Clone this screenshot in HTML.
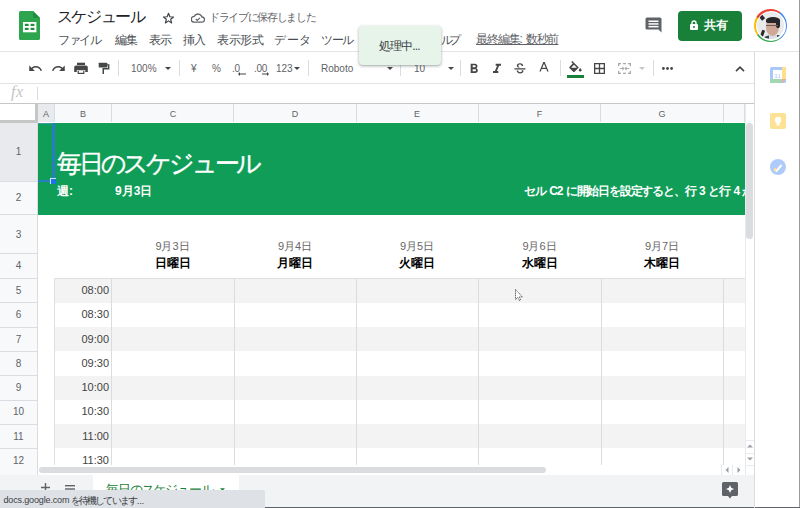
<!DOCTYPE html>
<html><head><meta charset="utf-8">
<style>
*{margin:0;padding:0;box-sizing:border-box}
html,body{width:800px;height:508px;overflow:hidden;background:#fff;font-family:"Liberation Sans",sans-serif;color:#202124}
.a{position:absolute}
.t{position:absolute;white-space:nowrap;line-height:1}
.hl{position:absolute;height:1px}
.vl{position:absolute;width:1px}
.ch{position:absolute;top:110px;font-size:9px;color:#5f6368;text-align:center;line-height:1}
.cb{position:absolute;top:104px;width:1px;height:18px;background:#dadce0}
.rn{position:absolute;left:0;width:37px;font-size:10px;color:#5f6368;text-align:center;line-height:1}
.rb{position:absolute;left:0;width:37px;height:1px;background:#dadce0}
.tm{position:absolute;left:55px;width:54px;text-align:right;font-size:11px;color:#434343;line-height:1}
.sep{position:absolute;top:60px;width:1px;height:16px;background:#dadce0}
.menu{position:absolute;top:34px;font-size:12px;color:#4a4e52;white-space:nowrap;line-height:1}
.dt{position:absolute;top:241px;text-align:center;font-size:11px;color:#666;line-height:1;white-space:nowrap}
.dw{position:absolute;top:257px;text-align:center;font-size:12px;color:#000;font-weight:bold;line-height:1;white-space:nowrap}
.ico{position:absolute;fill:#444746}
</style></head><body>

<!-- ===== Top header ===== -->
<svg class="a" style="left:19px;top:11px" width="21" height="29" viewBox="0 0 21 29">
 <path d="M1.6 0H14l7 7v20.4a1.6 1.6 0 0 1-1.6 1.6H1.6A1.6 1.6 0 0 1 0 27.4V1.6A1.6 1.6 0 0 1 1.6 0z" fill="#2da44e"/>
 <path d="M14 0l7 7h-5.4A1.6 1.6 0 0 1 14 5.4z" fill="#1e8e3e"/>
 <rect x="4" y="11" width="13.4" height="10.3" fill="#fff"/>
 <rect x="5.8" y="12.8" width="3.8" height="2.2" fill="#1e8e3e"/>
 <rect x="11.6" y="12.8" width="3.8" height="2.2" fill="#1e8e3e"/>
 <rect x="5.8" y="16.8" width="3.8" height="2.2" fill="#1e8e3e"/>
 <rect x="11.6" y="16.8" width="3.8" height="2.2" fill="#1e8e3e"/>
</svg>
<div id="title" class="t" style="left:56.75px;top:9px;font-size:16px;color:#202124;letter-spacing:-1.35px">スケジュール</div>
<svg class="a" style="left:162px;top:12px" width="13" height="12" viewBox="0 0 24 23"><path d="M12 2.5l2.6 6.6 7.1.4-5.5 4.5 1.8 6.9L12 17l-6 3.9 1.8-6.9-5.5-4.5 7.1-.4z" fill="none" stroke="#3c4043" stroke-width="2.2" stroke-linejoin="round"/></svg>
<svg class="a" style="left:191px;top:13px" width="14" height="10" viewBox="0 0 14 10"><path d="M3.2 9.2h7.6a2.6 2.6 0 0 0 .2-5.2A4.2 4.2 0 0 0 3.2 3.4 2.9 2.9 0 0 0 3.2 9.2z" fill="none" stroke="#5f6368" stroke-width="1.3"/><path d="M4.8 6l1.5 1.5 2.6-2.6" fill="none" stroke="#5f6368" stroke-width="1.2"/></svg>
<div id="saved" class="t" style="left:209px;top:12px;font-size:11px;color:#5f6368;letter-spacing:-1.33px">ドライブに保存しました</div>

<div id="m1" class="menu" style="left:58px;letter-spacing:-1.5px">ファイル</div>
<div id="m2" class="menu" style="left:115px;letter-spacing:-1.5px">編集</div>
<div id="m3" class="menu" style="left:149px;letter-spacing:-1.5px">表示</div>
<div id="m4" class="menu" style="left:183px;letter-spacing:-1.5px">挿入</div>
<div id="m5" class="menu" style="left:217px;letter-spacing:-0.5px">表示形式</div>
<div id="m6" class="menu" style="left:274px;letter-spacing:0.5px">データ</div>
<div id="m7" class="menu" style="left:321px;letter-spacing:-1.5px">ツール</div>
<div id="m8" class="menu" style="left:441px;letter-spacing:-4.5px">ルプ</div>
<div id="lastedit" class="t" style="left:476px;top:33px;font-size:12px;color:#5f6368;text-decoration:underline;letter-spacing:-1.15px;word-spacing:2px">最終編集: 数秒前</div>

<!-- comment icon -->
<svg class="a" style="left:645px;top:17px" width="17" height="16" viewBox="0 0 17 16"><path d="M2 0.5h13a1.5 1.5 0 0 1 1.5 1.5v13.5l-3-3H2A1.5 1.5 0 0 1 .5 11V2A1.5 1.5 0 0 1 2 .5z" fill="#5f6368"/><rect x="3.5" y="3.5" width="10" height="1.5" fill="#fff"/><rect x="3.5" y="6.2" width="10" height="1.5" fill="#fff"/><rect x="3.5" y="8.9" width="10" height="1.5" fill="#fff"/></svg>
<!-- share btn -->
<div class="a" style="left:678px;top:11px;width:64px;height:30px;background:#188038;border-radius:4px"></div>
<svg class="a" style="left:690px;top:20px" width="8" height="10" viewBox="0 0 8 10"><path d="M2 4.5V3a2 2 0 0 1 4 0v1.5" fill="none" stroke="#fff" stroke-width="1.4"/><rect x="0" y="4" width="8" height="6" rx="1" fill="#fff"/><circle cx="4" cy="7" r="1" fill="#188038"/></svg>
<div id="share" class="t" style="left:704px;top:19px;font-size:12px;color:#fff;font-weight:bold">共有</div>
<!-- avatar -->
<div class="a" style="left:754px;top:9px;width:33px;height:33px;border-radius:50%;background:conic-gradient(#ea4335 0 35deg,#4285f4 35deg 145deg,#34a853 145deg 235deg,#fbbc04 235deg 300deg,#ea4335 300deg)"></div>
<div class="a" style="left:755.5px;top:10.5px;width:30px;height:30px;border-radius:50%;background:#fff"></div>
<div class="a" style="left:757px;top:12px;width:27px;height:27px;border-radius:50%;overflow:hidden;background:#e9eaec">
 <div class="a" style="left:0;top:0;width:27px;height:27px;filter:blur(0.6px)">
  <div class="a" style="left:3px;top:3px;width:4px;height:5px;background:#2a2a2e;transform:rotate(-40deg)"></div>
  <div class="a" style="left:4px;top:18px;width:3px;height:7px;background:#2a2a2e;transform:rotate(20deg)"></div>
  <div class="a" style="left:7px;top:23px;width:22px;height:8px;border-radius:40% 40% 0 0;background:#3b3f4a"></div>
  <div class="a" style="left:12px;top:23px;width:8px;height:5px;background:#d9dde4"></div>
  <div class="a" style="left:9px;top:7px;width:13px;height:17px;border-radius:45% 45% 50% 50%;background:#cfa896"></div>
  <div class="a" style="left:9px;top:5px;width:14px;height:6px;border-radius:50% 50% 20% 20%;background:#25252a"></div>
  <div class="a" style="left:19px;top:8px;width:4px;height:8px;border-radius:40%;background:#25252a"></div>
  <div class="a" style="left:9px;top:13px;width:12px;height:1px;background:#6a5f5a"></div>
 </div>
</div>

<!-- toast -->
<div class="a" style="z-index:5;left:359px;top:26px;width:82px;height:39px;background:#e6f4ea;border-radius:4px;box-shadow:0 1px 2px rgba(60,64,67,.3),0 1px 3px 1px rgba(60,64,67,.15)"></div>
<div id="toast" class="t" style="z-index:6;left:379px;top:40px;font-size:12px;color:#3c4043;letter-spacing:-0.9px">処理中...</div>

<div class="hl" style="left:0;top:51px;width:799px;background:#e3e5e8"></div>

<!-- ===== Toolbar ===== -->
<!-- undo -->
<svg class="ico" style="left:28px;top:61px" width="15" height="15" viewBox="0 0 24 24"><path d="M12.5 8c-2.65 0-5.05.99-6.9 2.6L2 7v9h9l-3.62-3.62c1.39-1.16 3.16-1.88 5.12-1.88 3.54 0 6.55 2.31 7.6 5.5l2.37-.78C21.08 11.03 17.15 8 12.5 8z"/></svg>
<!-- redo -->
<svg class="ico" style="left:51px;top:61px" width="15" height="15" viewBox="0 0 24 24"><path d="M18.4 10.6C16.55 8.99 14.15 8 11.5 8c-4.65 0-8.58 3.03-9.96 7.22L3.9 16c1.05-3.19 4.05-5.5 7.6-5.5 1.95 0 3.73.72 5.12 1.88L13 16h9V7l-3.6 3.6z"/></svg>
<!-- print -->
<svg class="ico" style="left:73px;top:61px" width="16" height="14" viewBox="0 0 16 14"><rect x="4" y="1.7" width="8" height="2.3"/><path d="M3 4.5h10a1.8 1.8 0 0 1 1.8 1.8V11h-2.6V9H3.8v2H1.2V6.3A1.8 1.8 0 0 1 3 4.5z"/><rect x="4.6" y="9.6" width="6.8" height="3.4"/><rect x="5.8" y="9.6" width="4.4" height="2.2" fill="#fff"/></svg>
<!-- paint format -->
<svg class="ico" style="left:98px;top:62px" width="12" height="13" viewBox="0 0 12 13"><rect x="0.7" y="0.7" width="8.5" height="4.8" rx=".6"/><path d="M9 2.2h2.4v5.3H6V12H4.5V6h5.4V3.6H9z"/></svg>
<div class="sep" style="left:118px"></div>
<div class="t" style="left:131px;top:64px;font-size:10px;color:#5f6368">100%</div>
<svg class="ico" style="left:165px;top:67px" width="6" height="3" viewBox="0 0 6 3"><path d="M0 0h6L3 3z"/></svg>
<div class="sep" style="left:179px"></div>
<div class="t" style="left:191px;top:64px;font-size:10px;color:#5f6368">¥</div>
<div class="t" style="left:212px;top:64px;font-size:10px;color:#5f6368">%</div>
<div class="t" style="left:232px;top:64px;font-size:10px;color:#5f6368;letter-spacing:-0.3px">.0</div>
<svg class="ico" style="left:238px;top:72px" width="8" height="4" viewBox="0 0 8 4"><path d="M2 0v1.4h6v1.2H2V4L0 2z"/></svg>
<div class="t" style="left:254px;top:64px;font-size:10px;color:#5f6368;letter-spacing:-0.3px">.00</div>
<svg class="ico" style="left:262px;top:72px" width="7" height="4" viewBox="0 0 7 4"><path d="M5 0v1.4H0v1.2h5V4l2-2z"/></svg>
<div class="t" style="left:276px;top:64px;font-size:10px;color:#5f6368">123</div>
<svg class="ico" style="left:294px;top:67px" width="6" height="3" viewBox="0 0 6 3"><path d="M0 0h6L3 3z"/></svg>
<div class="sep" style="left:308px"></div>
<div class="t" style="left:321px;top:64px;font-size:10px;color:#5f6368">Roboto</div>
<svg class="ico" style="left:387px;top:67px" width="6" height="3" viewBox="0 0 6 3"><path d="M0 0h6L3 3z"/></svg>
<div class="sep" style="left:400px"></div>
<div class="t" style="left:414px;top:64px;font-size:10px;color:#5f6368">10</div>
<svg class="ico" style="left:448px;top:67px" width="6" height="3" viewBox="0 0 6 3"><path d="M0 0h6L3 3z"/></svg>
<div class="sep" style="left:460px"></div>
<svg class="ico" style="left:466px;top:61px" width="16" height="16" viewBox="0 0 24 24"><path d="M15.6 10.79c.97-.67 1.65-1.770 1.65-2.79 0-2.26-1.75-4-4-4H7v14h7.04c2.09 0 3.710-1.7 3.710-3.79 0-1.52-.86-2.82-2.15-3.42zM10 6.5h3c.83 0 1.5.67 1.5 1.5s-.67 1.5-1.5 1.5h-3v-3zm3.5 9H10v-3h3.5c.83 0 1.5.67 1.5 1.5s-.67 1.5-1.5 1.5z"/></svg>
<svg class="ico" style="left:489px;top:61px" width="16" height="16" viewBox="0 0 24 24"><path d="M10 4v3h2.21l-3.42 8H6v3h8v-3h-2.21l3.42-8H18V4z"/></svg>
<svg class="ico" style="left:514px;top:62px" width="12" height="12" viewBox="0 0 12 12"><path d="M6 1.2c-2 0-3.2 1-3.2 2.4 0 .8.4 1.4 1 1.8h2.6C5 5 4.3 4.6 4.3 3.7c0-.7.6-1.2 1.7-1.2 1.1 0 1.7.6 1.7 1.5h1.5C9.2 2.3 8 1.2 6 1.2zM0.5 6.2v1.3h11V6.2zM7.6 8.3c.1.2.2.4.2.7 0 .8-.6 1.2-1.7 1.2-1.2 0-1.9-.6-1.9-1.6H2.7c0 1.7 1.4 2.9 3.4 2.9 2 0 3.3-1 3.3-2.5 0-.3 0-.5-.1-.7z"/></svg>
<svg class="ico" style="left:539px;top:62px" width="10" height="10" viewBox="0 0 10 10"><path d="M4.3 0h1.4L9.6 9.5H8.2L7.3 7.1H2.7l-.9 2.4H.4zM5 1.8L3.2 5.8h3.6z"/></svg>
<div class="sep" style="left:560px"></div>
<svg class="ico" style="left:569px;top:61px" width="13" height="11" viewBox="0 0 13 11"><path d="M3.2 0l-1 1 1.6 1.6L.6 5.8a1 1 0 0 0 0 1.4l3.6 3.6a1 1 0 0 0 1.4 0l4.2-4.2zM5 3.8l2.9 2.9H2.1z"/><path d="M11.2 7s-1.3 1.5-1.3 2.3a1.3 1.3 0 0 0 2.6 0C12.5 8.5 11.2 7 11.2 7z"/></svg>
<div class="a" style="left:567px;top:75px;width:17px;height:3px;background:#188038"></div>
<svg class="ico" style="left:594px;top:63px" width="11" height="11" viewBox="0 0 11 11"><path d="M0 0h11v11H0zM1.3 1.3v3.55h3.55V1.3zm4.85 0v3.55H9.7V1.3zM1.3 6.15V9.7h3.55V6.15zm4.85 0V9.7H9.7V6.15z"/></svg>
<svg class="a" style="left:618px;top:63px" width="13" height="11" viewBox="0 0 13 11"><g fill="#a8abad"><rect x="0" y="0" width="3" height="1.3"/><rect x="10" y="0" width="3" height="1.3"/><rect x="0" y="9.7" width="3" height="1.3"/><rect x="10" y="9.7" width="3" height="1.3"/><rect x="0" y="0" width="1.3" height="3.2"/><rect x="11.7" y="0" width="1.3" height="3.2"/><rect x="0" y="7.8" width="1.3" height="3.2"/><rect x="11.7" y="7.8" width="1.3" height="3.2"/><rect x="5" y="0" width="3" height="1.3"/><rect x="5" y="9.7" width="3" height="1.3"/><path d="M1.8 4.9h2.6V3.3l2.1 2.2-2.1 2.2V6.1H1.8zM11.2 4.9H8.6V3.3L6.5 5.5l2.1 2.2V6.1h2.6z"/></g></svg>
<svg class="a" style="left:639px;top:67px" width="6" height="3" viewBox="0 0 6 3"><path d="M0 0h6L3 3z" fill="#c4c7c5"/></svg>
<div class="sep" style="left:653px"></div>
<svg class="ico" style="left:662px;top:67px" width="11" height="3" viewBox="0 0 11 3"><circle cx="1.4" cy="1.5" r="1.4"/><circle cx="5.5" cy="1.5" r="1.4"/><circle cx="9.6" cy="1.5" r="1.4"/></svg>
<svg class="a" style="left:735px;top:66px" width="10" height="6" viewBox="0 0 10 6"><path d="M1 5.2l4-4 4 4" fill="none" stroke="#444746" stroke-width="1.7"/></svg>

<div class="hl" style="left:0;top:83px;width:755px;background:#e3e3e3"></div>
<!-- formula bar -->
<div id="fx" class="t" style="left:11px;top:84px;font-size:16px;font-style:italic;font-family:'Liberation Serif',serif;color:#c4c4c4;letter-spacing:0.5px">fx</div>
<div class="vl" style="left:37px;top:87px;height:13px;background:#dadce0"></div>
<div class="hl" style="left:0;top:103px;width:755px;background:#c4c7c5"></div>

<!-- right side panel -->
<div class="vl" style="left:754px;top:52px;height:456px;background:#dadce0"></div>
<div class="vl" style="left:799px;top:0;height:508px;background:#9a9a9a"></div>
<div class="hl" style="left:755px;top:507px;width:45px;background:#5f6368"></div>
<svg class="a" style="left:770px;top:67px;opacity:.45" width="16" height="16" viewBox="0 0 16 16"><rect x="0" y="0" width="16" height="16" rx="1.5" fill="#4285f4"/><rect x="0" y="12" width="12" height="4" fill="#34a853"/><rect x="12" y="0" width="4" height="12" fill="#fbbc04"/><path d="M12 12h4l-4 4z" fill="#ea4335"/><rect x="3" y="3" width="9" height="9" fill="#fff"/><text x="7.5" y="10.5" font-size="6" text-anchor="middle" fill="#4285f4" font-family="Liberation Sans">31</text></svg>
<svg class="a" style="left:770px;top:113px;opacity:.42" width="16" height="16" viewBox="0 0 16 16"><rect x="0" y="0" width="16" height="16" rx="2" fill="#fbbc04"/><circle cx="8" cy="7" r="3.2" fill="#fff"/><rect x="6.5" y="9.5" width="3" height="3" fill="#fff"/></svg>
<svg class="a" style="left:770px;top:159px;opacity:.42" width="16" height="16" viewBox="0 0 16 16"><circle cx="8" cy="8" r="8" fill="#4285f4"/><path d="M4.5 10.5l2 1.5 5-6" fill="none" stroke="#fff" stroke-width="2"/><circle cx="5" cy="10.5" r="1.4" fill="#fbbc04"/></svg>

<!-- column headers -->
<div class="a" style="left:0;top:104px;width:745px;height:18px;background:#f8f9fa"></div>
<div class="a" style="left:0;top:104px;width:35px;height:16px;background:#fff"></div>
<div class="a" style="left:38px;top:104px;width:16px;height:18px;background:#e8eaed"></div>
<div class="ch" style="left:38px;width:16px">A</div>
<div class="ch" style="left:55px;width:56px">B</div>
<div class="ch" style="left:112px;width:122px">C</div>
<div class="ch" style="left:234px;width:122px">D</div>
<div class="ch" style="left:356px;width:122px">E</div>
<div class="ch" style="left:478px;width:123px">F</div>
<div class="ch" style="left:601px;width:122px">G</div>
<div class="cb" style="left:54px"></div>
<div class="cb" style="left:111px"></div>
<div class="cb" style="left:233px"></div>
<div class="cb" style="left:356px"></div>
<div class="cb" style="left:478px"></div>
<div class="cb" style="left:600px"></div>
<div class="cb" style="left:723px"></div>
<div class="cb" style="left:744px"></div>

<!-- row headers -->
<div class="a" style="left:0;top:122px;width:37px;height:353px;background:#f8f9fa"></div>
<div class="a" style="left:0;top:122px;width:37px;height:59px;background:#e8eaed"></div>
<div class="vl" style="left:37px;top:122px;height:353px;background:#dadce0"></div>
<div class="rb" style="top:181px"></div>
<div class="rb" style="top:214px"></div>
<div class="rb" style="top:253px"></div>
<div class="rb" style="top:278px"></div>
<div class="rb" style="top:302px"></div>
<div class="rb" style="top:327px"></div>
<div class="rb" style="top:351px"></div>
<div class="rb" style="top:375px"></div>
<div class="rb" style="top:400px"></div>
<div class="rb" style="top:424px"></div>
<div class="rb" style="top:448px"></div>
<div class="rn" style="top:147px">1</div>
<div class="rn" style="top:193px">2</div>
<div class="rn" style="top:230px">3</div>
<div class="rn" style="top:261px">4</div>
<div class="rn" style="top:286px">5</div>
<div class="rn" style="top:310px">6</div>
<div class="rn" style="top:335px">7</div>
<div class="rn" style="top:359px">8</div>
<div class="rn" style="top:383px">9</div>
<div class="rn" style="top:407px">10</div>
<div class="rn" style="top:432px">11</div>
<div class="rn" style="top:456px">12</div>
<!-- freeze bars -->
<div class="a" style="left:35px;top:104px;width:3px;height:19px;background:#c4c7c5"></div>
<div class="a" style="left:0;top:120px;width:38px;height:3px;background:#c4c7c5"></div>

<!-- green header -->
<div class="a" style="left:38px;top:123px;width:707px;height:92px;background:#0f9d58"></div>
<div id="bigt" class="t" style="left:57px;top:151px;font-size:25px;color:#fff;letter-spacing:-3.2px;-webkit-text-stroke:0.35px #fff">毎日のスケジュール</div>
<div id="week" class="t" style="left:57px;top:185px;font-size:12px;color:#fff;font-weight:bold">週:</div>
<div id="wdate" class="t" style="left:115px;top:185px;font-size:12px;color:#fff;font-weight:bold;letter-spacing:0px">9月3日</div>
<div class="a" style="left:520px;top:180px;width:225px;height:20px;overflow:hidden"><div id="note" class="t" style="left:4px;top:5px;font-size:12px;color:#fff;font-weight:bold;letter-spacing:-1.2px;word-spacing:1.5px">セル C2 に開始日を設定すると、行 3 と行 4 が</div></div>

<!-- selection -->
<div class="a" style="left:38px;top:123px;width:16px;height:1px;background:#5b9bd5;opacity:.6"></div>
<div class="a" style="left:52px;top:123px;width:3px;height:56px;background:#2a7dc2"></div>
<div class="a" style="left:38px;top:180px;width:13px;height:2px;background:#2a7dc2"></div>
<div class="a" style="left:50px;top:178px;width:6px;height:6px;background:#1a73e8;border-top:1px solid #cfe6f5;border-left:1px solid #cfe6f5"></div>

<!-- dates -->
<div id="d1" class="dt" style="left:111px;width:123px">9月3日</div>
<div class="dt" style="left:234px;width:122px">9月4日</div>
<div class="dt" style="left:356px;width:122px">9月5日</div>
<div class="dt" style="left:478px;width:123px">9月6日</div>
<div class="dt" style="left:601px;width:122px">9月7日</div>
<div id="w1" class="dw" style="left:111px;width:123px">日曜日</div>
<div class="dw" style="left:234px;width:122px">月曜日</div>
<div class="dw" style="left:356px;width:122px">火曜日</div>
<div class="dw" style="left:478px;width:123px">水曜日</div>
<div class="dw" style="left:601px;width:122px">木曜日</div>

<!-- schedule grid -->
<div class="a" style="left:55px;top:278px;width:690px;height:25px;background:#f3f3f3"></div>
<div class="a" style="left:55px;top:327px;width:690px;height:24px;background:#f3f3f3"></div>
<div class="a" style="left:55px;top:376px;width:690px;height:24px;background:#f3f3f3"></div>
<div class="a" style="left:55px;top:424px;width:690px;height:24px;background:#f3f3f3"></div>
<div class="hl" style="left:54px;top:278px;width:691px;background:#e0e0e0"></div>
<div class="vl" style="left:54px;top:278px;height:187px;background:#e0e0e0"></div>
<div class="vl" style="left:111px;top:278px;height:187px;background:#dcdcdc"></div>
<div class="vl" style="left:234px;top:278px;height:187px;background:#dcdcdc"></div>
<div class="vl" style="left:356px;top:278px;height:187px;background:#dcdcdc"></div>
<div class="vl" style="left:478px;top:278px;height:187px;background:#dcdcdc"></div>
<div class="vl" style="left:601px;top:278px;height:187px;background:#dcdcdc"></div>
<div class="vl" style="left:723px;top:278px;height:187px;background:#dcdcdc"></div>

<div class="tm" style="top:285px">08:00</div>
<div class="tm" style="top:309px">08:30</div>
<div class="tm" style="top:334px">09:00</div>
<div class="tm" style="top:358px">09:30</div>
<div class="tm" style="top:382px">10:00</div>
<div class="tm" style="top:406px">10:30</div>
<div class="tm" style="top:431px">11:00</div>
<div class="tm" style="top:455px">11:30</div>

<!-- mouse cursor -->
<svg class="a" style="left:515px;top:289px" width="9" height="12" viewBox="0 0 9 12"><path d="M.5.5v10l2.3-2.1 1.5 3.2 1.3-.6-1.4-3.1h3.2z" fill="#fff" stroke="#3a3a3a" stroke-width=".8" stroke-dasharray="1.2 .6"/></svg>

<!-- vertical scrollbar -->
<div class="a" style="left:745px;top:104px;width:9px;height:371px;background:#fff"></div>
<div class="vl" style="left:745px;top:104px;height:371px;background:#e8eaed"></div>
<div class="a" style="left:746px;top:123px;width:7px;height:116px;background:#dadce0;border-radius:4px"></div>
<div class="hl" style="left:745px;top:440px;width:9px;background:#e8eaed"></div>
<div class="hl" style="left:745px;top:453px;width:9px;background:#e8eaed"></div>
<div class="hl" style="left:745px;top:465px;width:9px;background:#e8eaed"></div>
<svg class="a" style="left:747px;top:444px" width="6" height="4" viewBox="0 0 6 4"><path d="M0 3.5L3 .5 6 3.5z" fill="#9aa0a6"/></svg>
<svg class="a" style="left:747px;top:457px" width="6" height="4" viewBox="0 0 6 4"><path d="M0 .5L3 3.5 6 .5z" fill="#9aa0a6"/></svg>
<!-- horizontal scrollbar -->
<div class="a" style="left:38px;top:465px;width:707px;height:10px;background:#fff"></div>
<div class="a" style="left:39px;top:467px;width:507px;height:6px;background:#dadce0;border-radius:3px"></div>
<div class="vl" style="left:721px;top:465px;height:10px;background:#e8eaed"></div>
<div class="vl" style="left:732px;top:465px;height:10px;background:#e8eaed"></div>
<svg class="a" style="left:725px;top:467px" width="4" height="6" viewBox="0 0 4 6"><path d="M3.5 0L.5 3 3.5 6z" fill="#9aa0a6"/></svg>
<svg class="a" style="left:737px;top:467px" width="4" height="6" viewBox="0 0 4 6"><path d="M.5 0L3.5 3 .5 6z" fill="#9aa0a6"/></svg>

<!-- bottom bar -->
<div class="a" style="left:0;top:475px;width:754px;height:33px;background:#f1f3f4"></div>
<div class="hl" style="left:0;top:507px;width:754px;background:#5f6368"></div>
<svg class="a" style="left:41px;top:483px" width="9" height="9" viewBox="0 0 9 9"><path d="M3.8 0h1.4v3.8H9v1.4H5.2V9H3.8V5.2H0V3.8h3.8z" fill="#5f6368"/></svg>
<svg class="a" style="left:65px;top:485px" width="10" height="8" viewBox="0 0 10 8"><rect y="0" width="10" height="1.4" fill="#5f6368"/><rect y="3.3" width="10" height="1.4" fill="#5f6368"/><rect y="6.6" width="10" height="1.4" fill="#5f6368"/></svg>
<div class="a" style="left:93px;top:475px;width:146px;height:33px;background:#fff"></div>
<div id="tab" class="t" style="left:106px;top:484px;font-size:12.5px;color:#188038;letter-spacing:-1.15px">毎日のスケジュール</div>
<svg class="a" style="left:220px;top:488px" width="5" height="3" viewBox="0 0 6 3"><path d="M0 0h6L3 3z" fill="#188038"/></svg>
<svg class="a" style="left:722px;top:482px" width="16" height="17" viewBox="0 0 16 17"><path d="M1.5 0h13A1.5 1.5 0 0 1 16 1.5v11a1.5 1.5 0 0 1-1.5 1.5H10L8 16.5 6 14H1.5A1.5 1.5 0 0 1 0 12.5v-11A1.5 1.5 0 0 1 1.5 0z" fill="#5f6368"/><path d="M8 3l1.2 2.8L12 7l-2.8 1.2L8 11 6.8 8.2 4 7l2.8-1.2z" fill="#fff"/></svg>

<!-- status bar -->
<div class="a" style="left:0;top:490px;width:265px;height:18px;background:#dee1e6;border-top-right-radius:2px"></div>
<div id="status" class="t" style="left:3.5px;top:496px;font-size:9px;color:#3c4043;letter-spacing:-0.15px">docs.google.com</div>
<div id="status2" class="t" style="left:71px;top:496px;font-size:9.5px;color:#3c4043;letter-spacing:-1.9px">を待機しています<span style="letter-spacing:-0.3px;margin-left:1px">...</span></div>

</body></html>
